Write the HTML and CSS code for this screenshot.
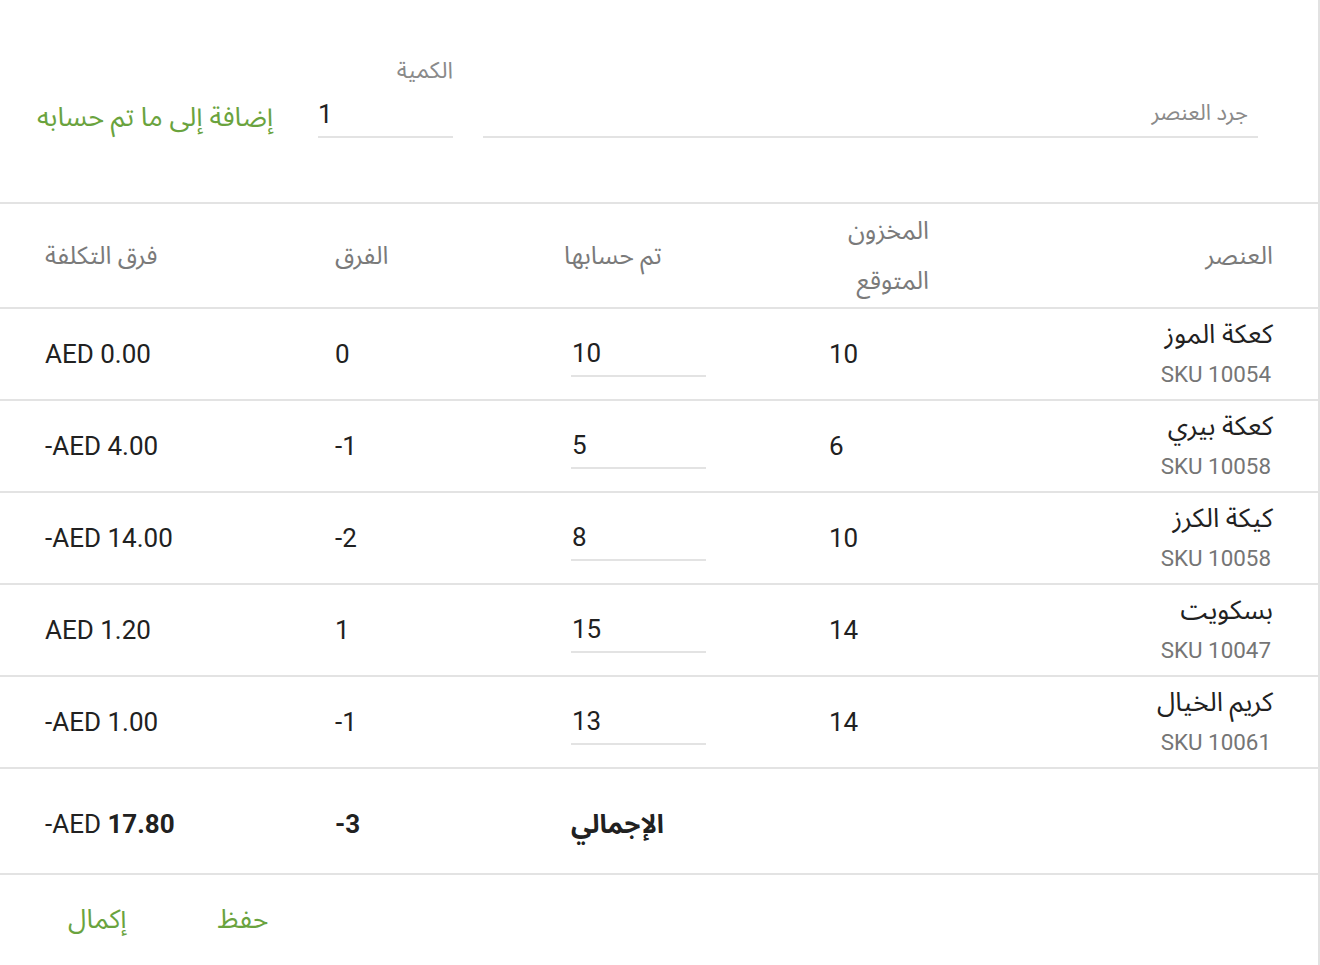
FILE: index.html
```html
<!DOCTYPE html>
<html lang="ar" dir="rtl">
<head>
<meta charset="utf-8">
<title>جرد</title>
<link rel="stylesheet" href="styles.css">
</head>
<body>
<div class="card">
  <section class="add-bar">
    <div class="field field-item">
      <input class="line-input search-input" type="text" placeholder="جرد العنصر">
    </div>
    <div class="field field-qty">
      <label class="field-label">الكمية</label>
      <input class="line-input ltr-input" type="text" value="1">
    </div>
    <button class="text-btn add-btn" type="button">إضافة إلى ما تم حسابه</button>
  </section>

  <div class="table">
    <div class="row head">
      <div class="cell c-item">العنصر</div>
      <div class="cell c-exp"><span class="head-wrap">المخزون المتوقع</span></div>
      <div class="cell c-count">تم حسابها</div>
      <div class="cell c-diff">الفرق</div>
      <div class="cell c-cost">فرق التكلفة</div>
    </div>

    <div class="row item">
      <div class="cell c-item"><div class="name">كعكة الموز</div><div class="sku">SKU 10054</div></div>
      <div class="cell c-exp num">10</div>
      <div class="cell c-count"><input class="line-input cnt-input ltr-input" type="text" value="10"></div>
      <div class="cell c-diff num">0</div>
      <div class="cell c-cost num">AED 0.00</div>
    </div>

    <div class="row item">
      <div class="cell c-item"><div class="name">كعكة بيري</div><div class="sku">SKU 10058</div></div>
      <div class="cell c-exp num">6</div>
      <div class="cell c-count"><input class="line-input cnt-input ltr-input" type="text" value="5"></div>
      <div class="cell c-diff num">-1</div>
      <div class="cell c-cost num">-AED 4.00</div>
    </div>

    <div class="row item">
      <div class="cell c-item"><div class="name">كيكة الكرز</div><div class="sku">SKU 10058</div></div>
      <div class="cell c-exp num">10</div>
      <div class="cell c-count"><input class="line-input cnt-input ltr-input" type="text" value="8"></div>
      <div class="cell c-diff num">-2</div>
      <div class="cell c-cost num">-AED 14.00</div>
    </div>

    <div class="row item">
      <div class="cell c-item"><div class="name">بسكويت</div><div class="sku">SKU 10047</div></div>
      <div class="cell c-exp num">14</div>
      <div class="cell c-count"><input class="line-input cnt-input ltr-input" type="text" value="15"></div>
      <div class="cell c-diff num">1</div>
      <div class="cell c-cost num">AED 1.20</div>
    </div>

    <div class="row item">
      <div class="cell c-item"><div class="name">كريم الخيال</div><div class="sku">SKU 10061</div></div>
      <div class="cell c-exp num">14</div>
      <div class="cell c-count"><input class="line-input cnt-input ltr-input" type="text" value="13"></div>
      <div class="cell c-diff num">-1</div>
      <div class="cell c-cost num">-AED 1.00</div>
    </div>

    <div class="row total">
      <div class="cell c-item"></div>
      <div class="cell c-exp"></div>
      <div class="cell c-count"><span class="total-label">الإجمالي</span></div>
      <div class="cell c-diff num"><b>-3</b></div>
      <div class="cell c-cost num">-AED <b>17.80</b></div>
    </div>
  </div>

  <footer class="actions">
    <button class="text-btn" type="button">حفظ</button>
    <button class="text-btn" type="button">إكمال</button>
  </footer>
</div>
</body>
</html>
```

FILE: styles.css
```css
html, body {
  margin: 0;
  padding: 0;
  background: #ffffff;
}

body {
  font-family: Roboto, "Noto Sans Arabic", "Noto Naskh Arabic", "DejaVu Sans", sans-serif;
  color: #212121;
  direction: rtl;
}

.card {
  width: 1318px;
  height: 965px;
  border-right: 2px solid #e2e2e2;
  background: #fff;
  overflow: hidden;
}

/* ---------- top add bar ---------- */
.add-bar {
  height: 202px;
  box-sizing: border-box;
  display: flex;
  align-items: flex-end;
  padding: 0 60px 64px 37px;
}

.field {
  display: flex;
  flex-direction: column;
}

.field-item {
  width: 775px;
}

.field-qty {
  width: 135px;
  margin-right: 30px;
}

.field-label {
  font-size: 23px;
  line-height: 30px;
  color: #8a8a8a;
  margin-bottom: 6px;
}

.line-input {
  font-family: inherit;
  font-size: 26px;
  color: #212121;
  height: 46px;
  box-sizing: border-box;
  border: 0;
  border-bottom: 2px solid #e3e3e3;
  padding: 0 10px 0 0;
  background: transparent;
  outline: none;
  width: 100%;
}

.search-input {
  padding-bottom: 6px;
}

.line-input::placeholder {
  color: #8a8a8a;
  font-size: 22px;
}

.ltr-input {
  direction: ltr;
  text-align: left;
}

.text-btn {
  font-family: inherit;
  background: none;
  border: 0;
  padding: 0;
  color: #6aa33e;
  font-size: 26.5px;
  cursor: pointer;
}

.add-btn {
  margin-right: auto;
  font-size: 27px;
  height: 42px;
  line-height: 42px;
}

/* ---------- table ---------- */
.table {
  border-top: 2px solid #e3e3e3;
}

.row {
  display: grid;
  grid-template-columns: 344px 100px 265px 229px 290px;
  padding: 0 45px;
  border-bottom: 2px solid #e3e3e3;
  align-items: center;
}

.row.head {
  height: 103px;
  color: #7a7a7a;
  font-size: 25px;
}

.row.item {
  height: 90px;
}

.row.total {
  height: 106px;
  box-sizing: border-box;
  padding-top: 6px;
}

.cell {
  min-width: 0;
}

.head .c-item {
  text-align: right;
}

.head .c-exp {
  text-align: right;
  line-height: 50px;
}

.head-wrap {
  display: block;
}

.head .c-count,
.head .c-diff,
.head .c-cost {
  text-align: left;
}

.name {
  font-size: 26.5px;
  line-height: 40px;
  color: #212121;
}

.sku {
  font-size: 22.4px;
  line-height: 40px;
  color: #757575;
  margin-right: 2px;
}

.num {
  direction: ltr;
  text-align: left;
  font-size: 26px;
  color: #212121;
}

.cnt-input {
  width: 135px;
  margin-left: 7px;
  padding-left: 1px;
  display: block;
}

.c-count {
  display: flex;
  justify-content: flex-end;
}

.total b {
  font-weight: 700;
}

.total-label {
  font-weight: 700;
  font-size: 26px;
  margin-left: 7px;
}

/* ---------- footer ---------- */
.actions {
  height: 90px;
  display: flex;
  align-items: center;
  justify-content: flex-end;
  padding-left: 68px;
  gap: 91px;
}
```
